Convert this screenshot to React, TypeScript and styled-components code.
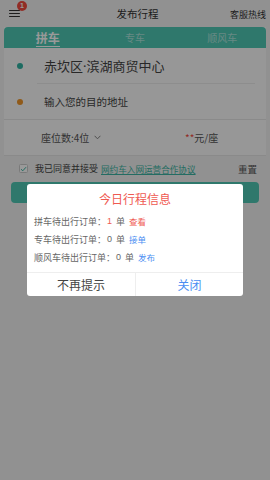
import React from 'react';
import styled, { createGlobalStyle } from 'styled-components';

const GlobalStyle = createGlobalStyle`
  html, body {
    margin: 0;
    padding: 0;
    background: #f2f2f2;
  }
  * {
    box-sizing: border-box;
  }
  body {
    font-family: 'Noto Sans CJK SC', 'Noto Sans', sans-serif;
  }
`;

const Page = styled.div`
  position: relative;
  width: 270px;
  height: 480px;
  overflow: hidden;
  background: #f2f2f2;
  color: #333;
`;

const Header = styled.div`
  height: 27px;
  display: grid;
  grid-template-columns: 1fr auto 1fr;
  align-items: center;
  padding: 0 4px 0 9px;
`;

const MenuButton = styled.div`
  position: relative;
  width: 11px;
  height: 7px;
  display: flex;
  flex-direction: column;
  justify-content: space-between;
`;

const MenuLine = styled.span`
  display: block;
  height: 1.4px;
  background: #333;
  border-radius: 1px;
`;

const Badge = styled.span`
  position: absolute;
  top: -9px;
  left: 8px;
  width: 10px;
  height: 10px;
  border-radius: 50%;
  background: #f24a3e;
  color: #fff;
  font-size: 7px;
  line-height: 10px;
  text-align: center;
  font-family: 'Liberation Sans', sans-serif;
  font-weight: bold;
`;

const Title = styled.div`
  font-size: 10.5px;
  color: #333;
`;

const Hotline = styled.div`
  justify-self: end;
  font-size: 9px;
  color: #333;
  padding-top: 1px;
`;

const Card = styled.div`
  margin: 0 4px;
  background: #fcfcfc;
`;

const Tabs = styled.div`
  height: 21px;
  background: #4fc8b5;
  border-radius: 4px 4px 0 0;
  display: grid;
  grid-template-columns: 1fr 1fr 1fr;
  align-items: center;
`;

const Tab = styled.div<{ $active?: boolean }>`
  justify-self: center;
  font-size: ${({ $active }) => ($active ? '12px' : '10px')};
  font-weight: ${({ $active }) => ($active ? 'bold' : 'normal')};
  color: ${({ $active }) => ($active ? '#fff' : 'rgba(255,255,255,0.55)')};
  line-height: 14px;
  border-bottom: ${({ $active }) => ($active ? '1px solid #fff' : '1px solid transparent')};
  padding-bottom: 1px;
  margin-top: 2px;
`;

const AddressRow = styled.div<{ $inset?: boolean }>`
  height: 36px;
  display: flex;
  align-items: center;
  padding-left: 13px;
  position: relative;
  border-bottom: 1px solid ${({ $inset }) => ($inset ? 'transparent' : '#e6e6e6')};
  &::after {
    content: '';
    display: ${({ $inset }) => ($inset ? 'block' : 'none')};
    position: absolute;
    left: 33px;
    right: 11px;
    bottom: -1px;
    height: 1px;
    background: #ececec;
  }
`;

const Dot = styled.span<{ $color: string }>`
  width: 6px;
  height: 6px;
  border-radius: 50%;
  background: ${({ $color }) => $color};
  margin-right: 21px;
  flex-shrink: 0;
`;

const AddressText = styled.span<{ $size: number }>`
  font-family: 'Noto Sans', 'Noto Sans CJK SC', sans-serif;
  font-size: ${({ $size }) => $size}px;
  color: #444;
`;

const SeatRow = styled.div`
  height: 36px;
  display: flex;
  align-items: center;
  padding: 0 0 0 37px;
  border-bottom: 1px solid #e6e6e6;
`;

const SeatPicker = styled.div`
  display: flex;
  align-items: center;
  gap: 5px;
  font-size: 10px;
  color: #555;
  width: 144px;
`;

const Price = styled.div`
  font-size: 10px;
  color: #555;
`;

const Stars = styled.span`
  color: #f24a3e;
`;

const AgreeRow = styled.div`
  height: 25px;
  display: flex;
  align-items: center;
  padding: 0 13px 0 19px;
  font-size: 9px;
  color: #444;
`;

const CheckBox = styled.span`
  width: 9px;
  height: 9px;
  border: 1px solid #ccc;
  border-radius: 1.5px;
  display: flex;
  align-items: center;
  justify-content: center;
  margin-right: 7px;
  background: #fff;
`;

const AgreeLink = styled.span`
  color: #3bb5a3;
  text-decoration: underline;
  margin-left: 3px;
  font-size: 8.6px;
`;

const Reset = styled.span`
  margin-left: auto;
  font-size: 9.5px;
  color: #555;
`;

const Submit = styled.div`
  margin: 1px 11px 0;
  height: 21px;
  border-radius: 4px;
  background: #4fc8b5;
`;

const Mask = styled.div`
  position: absolute;
  inset: 0;
  background: rgba(0, 0, 0, 0.4);
  display: flex;
  justify-content: center;
  align-items: flex-start;
  padding-top: 184px;
`;

const Dialog = styled.div`
  width: 216px;
  background: #fff;
  border-radius: 3px;
  overflow: hidden;
`;

const DialogTitle = styled.div`
  text-align: center;
  font-size: 12px;
  color: #ef5a52;
  padding-top: 7px;
  height: 28px;
  line-height: 16px;
`;

const Lines = styled.div`
  display: flex;
  flex-direction: column;
  padding: 0 0 6px 7px;
`;

const Line = styled.div`
  height: 18px;
  display: flex;
  align-items: center;
  font-size: 9px;
  color: #666;
`;

const Count = styled.span<{ $red?: boolean }>`
  color: ${({ $red }) => ($red ? '#ef5a52' : '#666')};
  margin: 0 4px 0 1px;
  font-family: 'Liberation Sans', sans-serif;
`;

const Action = styled.span<{ $color: string }>`
  color: ${({ $color }) => $color};
  margin-left: 4px;
  font-size: 8.5px;
`;

const Buttons = styled.div`
  height: 24px;
  border-top: 1px solid #eee;
  display: grid;
  grid-template-columns: 1fr 1fr;
`;

const DialogButton = styled.div<{ $primary?: boolean }>`
  display: flex;
  align-items: center;
  justify-content: center;
  font-size: 12px;
  color: ${({ $primary }) => ($primary ? '#4a8ef2' : '#444')};
  & + & {
    border-left: 1px solid #eee;
  }
`;

const Chevron = () => (
  <svg width="7" height="5" viewBox="0 0 7 5">
    <path d="M0.6 0.8 L3.5 3.8 L6.4 0.8" fill="none" stroke="#777" strokeWidth="0.9" />
  </svg>
);

const Tick = () => (
  <svg width="7" height="6" viewBox="0 0 7 6">
    <path d="M1 3.2 L2.8 4.8 L6 1.2" fill="none" stroke="#3bb5a3" strokeWidth="1" />
  </svg>
);

const App: React.FC = () => {
  const orders = [
    { name: '拼车', count: 1, red: true, action: '查看', color: '#ef5a52' },
    { name: '专车', count: 0, red: false, action: '接单', color: '#4a8ef2' },
    { name: '顺风车', count: 0, red: false, action: '发布', color: '#4a8ef2' },
  ];

  return (
    <Page>
      <GlobalStyle />
      <Header>
        <MenuButton>
          <MenuLine />
          <MenuLine />
          <MenuLine />
          <Badge>1</Badge>
        </MenuButton>
        <Title>发布行程</Title>
        <Hotline>客服热线</Hotline>
      </Header>

      <Card>
        <Tabs>
          <Tab $active>拼车</Tab>
          <Tab>专车</Tab>
          <Tab>顺风车</Tab>
        </Tabs>
        <AddressRow $inset>
          <Dot $color="#2fb3a2" />
          <AddressText $size={13}>赤坎区·滨湖商贸中心</AddressText>
        </AddressRow>
        <AddressRow>
          <Dot $color="#f0962a" />
          <AddressText $size={10.5}>输入您的目的地址</AddressText>
        </AddressRow>
        <SeatRow>
          <SeatPicker>
            座位数:4位 <Chevron />
          </SeatPicker>
          <Price>
            <Stars>**</Stars>元/座
          </Price>
        </SeatRow>
      </Card>

      <AgreeRow>
        <CheckBox>
          <Tick />
        </CheckBox>
        我已同意并接受
        <AgreeLink>网约车入网运营合作协议</AgreeLink>
        <Reset>重置</Reset>
      </AgreeRow>
      <Submit />

      <Mask>
        <Dialog>
          <DialogTitle>今日行程信息</DialogTitle>
          <Lines>
            {orders.map((o) => (
              <Line key={o.name}>
                {o.name}待出行订单：
                <Count $red={o.red}>{o.count}</Count>单
                <Action $color={o.color}>{o.action}</Action>
              </Line>
            ))}
          </Lines>
          <Buttons>
            <DialogButton>不再提示</DialogButton>
            <DialogButton $primary>关闭</DialogButton>
          </Buttons>
        </Dialog>
      </Mask>
    </Page>
  );
};

export default App;
